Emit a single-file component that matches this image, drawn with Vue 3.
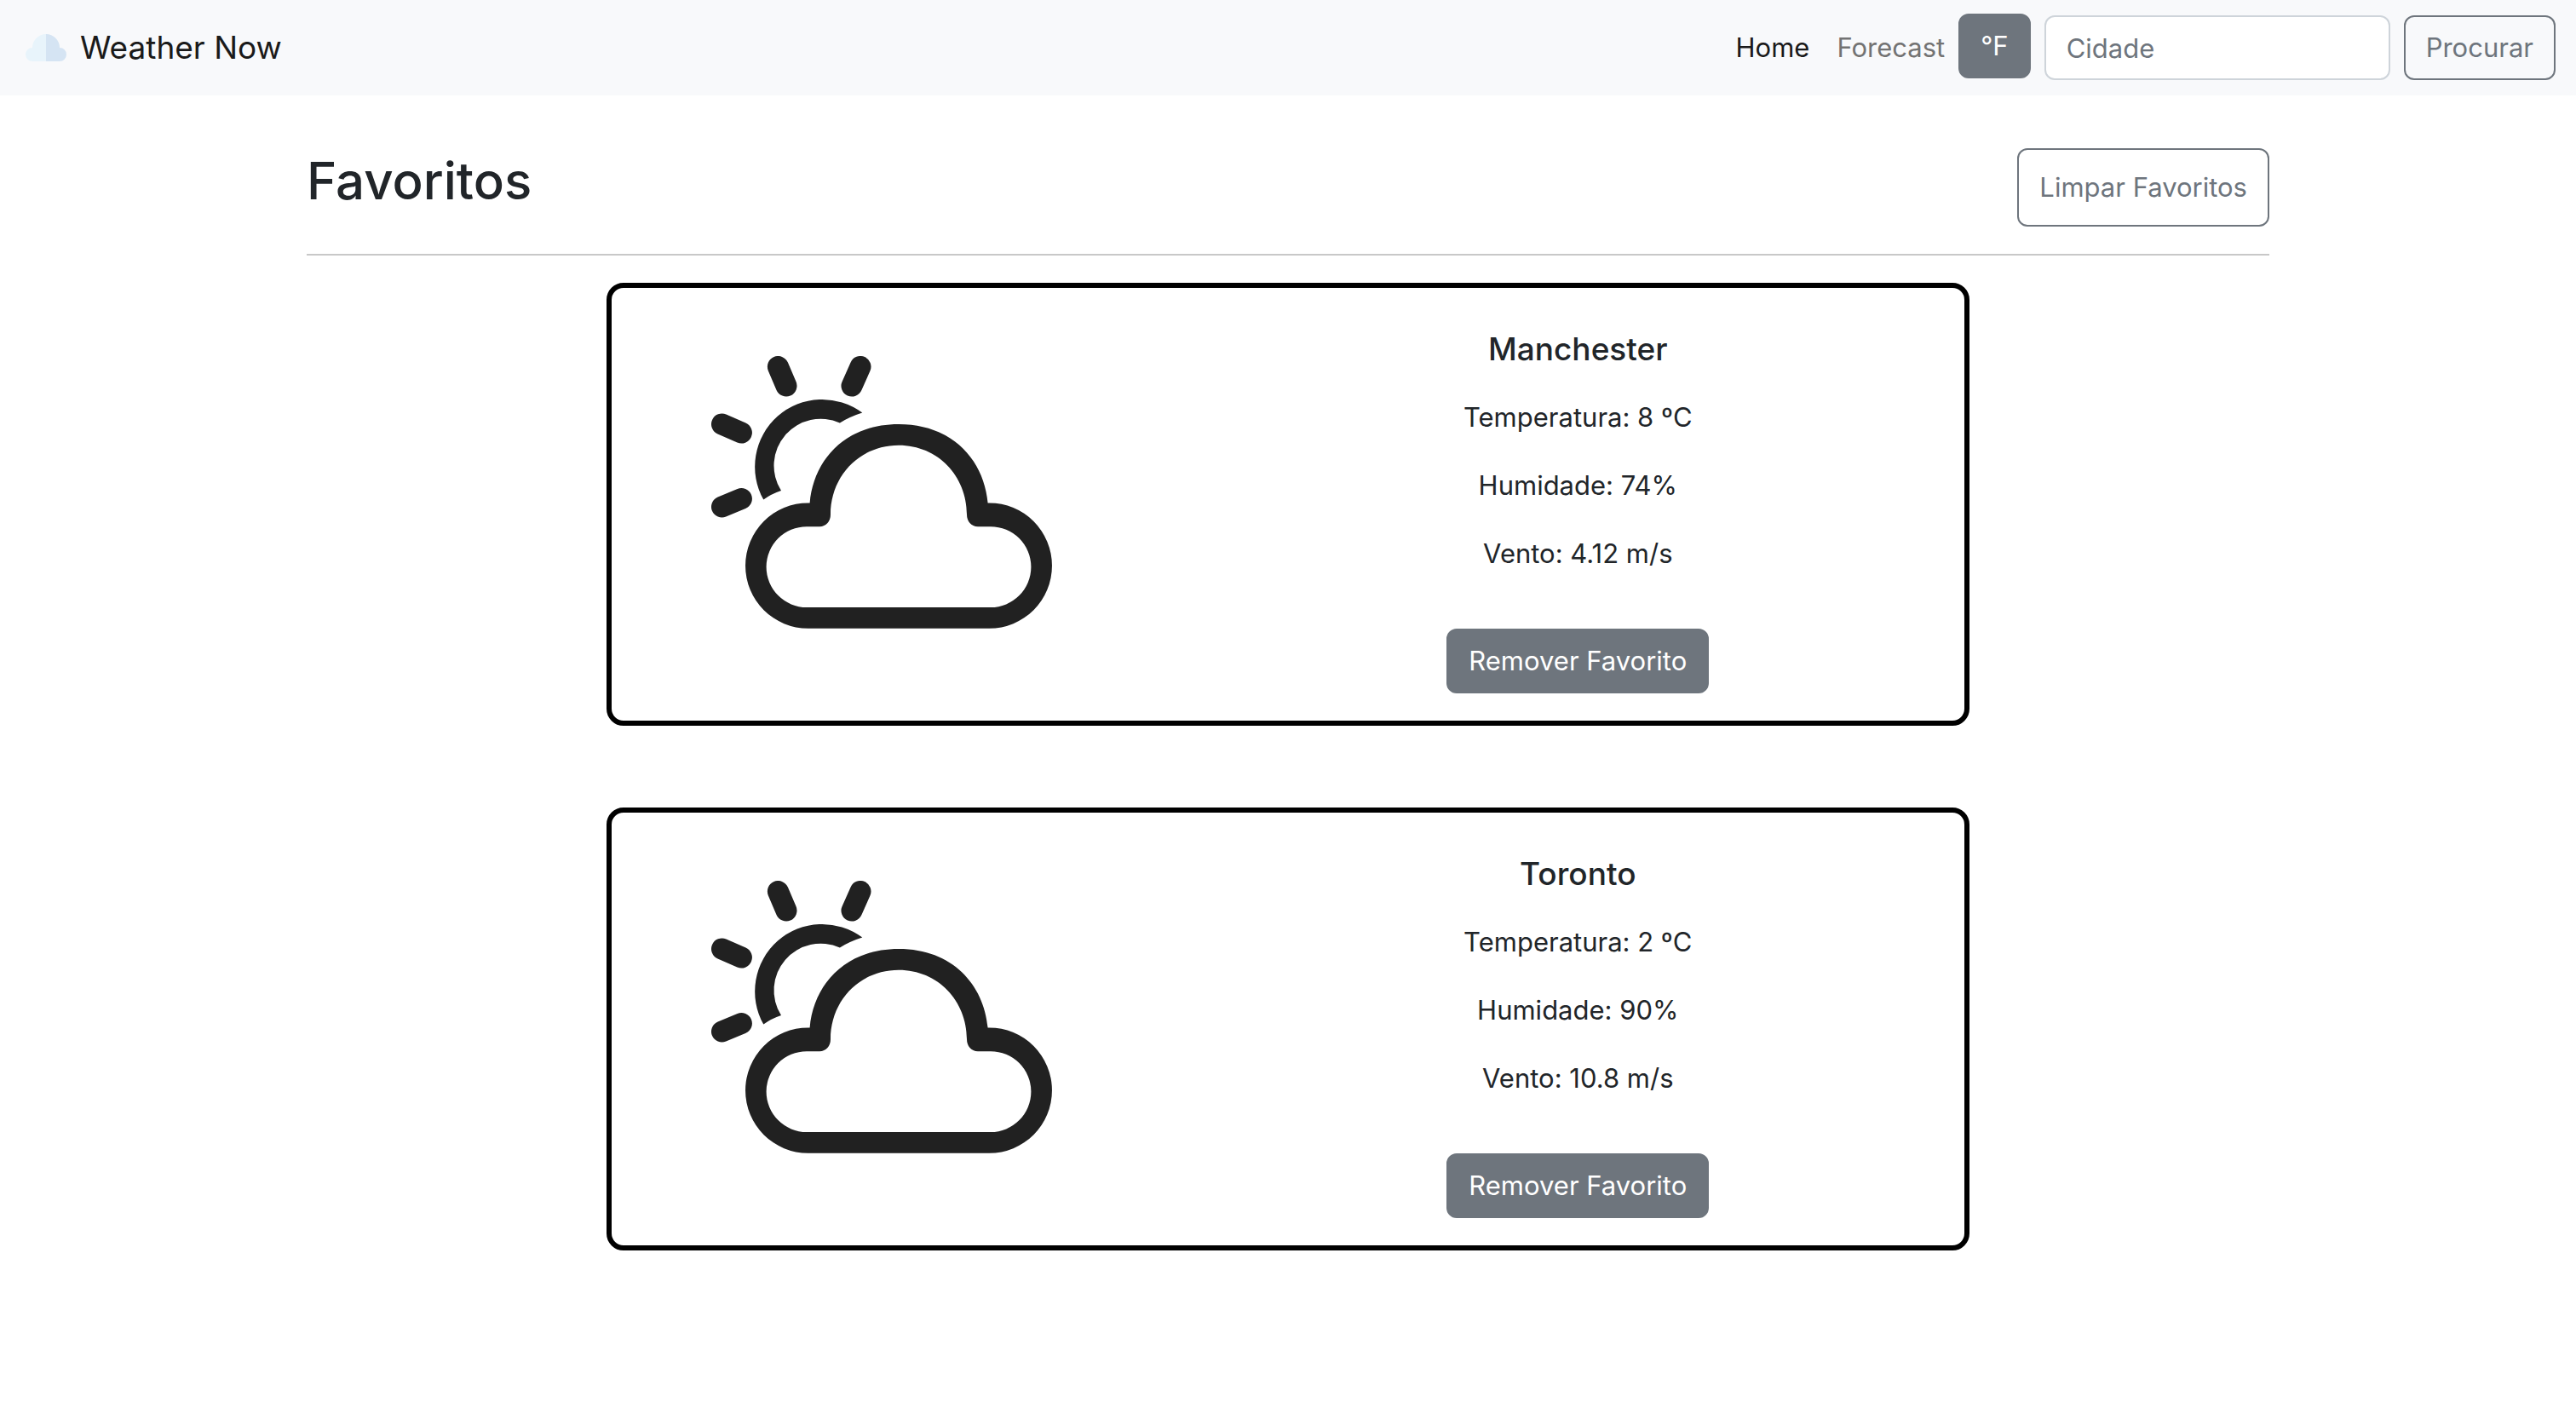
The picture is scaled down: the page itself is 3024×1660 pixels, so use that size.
<script setup>
import { ref } from 'vue'

const query = ref('')

const favorites = ref([
  { city: 'Manchester', temperature: '8 ºC', humidity: '74%', wind: '4.12 m/s' },
  { city: 'Toronto', temperature: '2 ºC', humidity: '90%', wind: '10.8 m/s' },
])

function remove(city) {
  favorites.value = favorites.value.filter((item) => item.city !== city)
}

function clearAll() {
  favorites.value = []
}
</script>

<template>
  <div class="page">
    <header class="navbar">
      <a class="brand" href="#">
        <svg class="brand-logo" viewBox="0 0 48 32" aria-hidden="true">
          <path fill="#e8f4fb" d="M24 0A16 16 0 0 0 8 16a8 8 0 0 0 0 16H24Z" />
          <path fill="#d5e4f3" d="M24 0A16 16 0 0 1 40 16a8 8 0 0 1 0 16H24Z" />
        </svg>
        <span>Weather Now</span>
      </a>
      <nav class="menu">
        <a class="link active" href="#home">Home</a>
        <a class="link" href="#forecast">Forecast</a>
        <button class="btn btn-solid unit" type="button">°F</button>
      </nav>
      <form class="search" @submit.prevent>
        <input v-model="query" class="field" type="search" placeholder="Cidade" aria-label="Cidade" />
        <button class="btn btn-outline" type="submit">Procurar</button>
      </form>
    </header>

    <main class="container">
      <div class="heading">
        <h2 class="title">Favoritos</h2>
        <button class="btn btn-outline clear" type="button" @click="clearAll">Limpar Favoritos</button>
      </div>

      <section class="cards">
        <article v-for="item in favorites" :key="item.city" class="card">
          <div class="picture">
            <svg class="weather" viewBox="0 0 400 320" aria-hidden="true">
              <g stroke="#212121" stroke-width="25" stroke-linecap="round">
                <path d="M78.4 12.5L88 35" />
                <path d="M175 12.5L165 35" />
                <path d="M12.5 80L35.4 90" />
                <path d="M12.5 177L35.4 167.5" />
              </g>
              <path
                fill="#212121"
                d="M61.3 168.6A79 79 0 0 1 177.3 66.5Q163 71 150.9 78.4A55 55 0 0 0 82 158Q70 162 61.3 168.6Z"
              />
              <path
                fill="#212121"
                fill-rule="evenodd"
                d="M220 80C283 80 320 122 324.6 172.4H326.3A73.7 73.7 0 0 1 326.3 319.8H113.7A73.7 73.7 0 0 1 113.7 172.4H115.6C120 122 157 80 220 80ZM220 104.8C174 104.8 140 141 140 186C140 194 135 200.2 127 200.2H112A47.4 47.4 0 0 0 112 295H328A47.4 47.4 0 0 0 328 200.2H313C305 200.2 300 194 300 186C300 141 266 104.8 220 104.8Z"
              />
            </svg>
          </div>
          <div class="details">
            <h5 class="city">{{ item.city }}</h5>
            <p>Temperatura: {{ item.temperature }}</p>
            <p>Humidade: {{ item.humidity }}</p>
            <p>Vento: {{ item.wind }}</p>
            <button class="btn btn-solid remove" type="button" @click="remove(item.city)">Remover Favorito</button>
          </div>
        </article>
      </section>
    </main>
  </div>
</template>

<style>
body {
  margin: 0;
  background: #fff;
}
</style>

<style scoped>
.page {
  font-family: Inter, 'Liberation Sans', sans-serif;
  font-size: 31px;
  line-height: 48px;
  color: #212529;
}

.navbar {
  display: flex;
  align-items: center;
  box-sizing: border-box;
  min-height: 112px;
  padding: 16px 24px;
  background: #f8f9fb;
}

.brand {
  display: flex;
  align-items: center;
  gap: 16px;
  margin-right: auto;
  padding-left: 6px;
  font-size: 37px;
  color: #1a1a1a;
  text-decoration: none;
}

.brand-logo {
  width: 48px;
  height: 32px;
}

.menu {
  display: flex;
  align-items: center;
  margin-right: 16px;
}

.link {
  padding: 0 16px;
  color: #737373;
  text-decoration: none;
}

.link.active {
  color: #1a1a1a;
}

.search {
  display: flex;
  gap: 16px;
}

.btn {
  box-sizing: border-box;
  height: 76px;
  padding: 0 24px;
  border: 2px solid #6e757d;
  border-radius: 12px;
  font: inherit;
  cursor: pointer;
}

.btn-solid {
  background: #6e757d;
  color: #fff;
}

.btn-outline {
  background: transparent;
  color: #6e757d;
}

.unit {
  margin-bottom: 4px;
}

.field {
  box-sizing: border-box;
  width: 406px;
  height: 76px;
  padding: 0 24px;
  border: 2px solid #ced4da;
  border-radius: 12px;
  background: #fff;
  font: inherit;
  color: #212529;
  appearance: none;
}

.field::placeholder {
  color: #6e757d;
  opacity: 1;
}

.container {
  max-width: 2304px;
  margin: 0 auto;
  padding: 62px 48px 96px;
}

.heading {
  display: flex;
  justify-content: space-between;
  align-items: flex-start;
  padding-bottom: 32px;
  border-bottom: 2px solid #c8c8c8;
}

.title {
  margin: 0;
  font-size: 60px;
  font-weight: 500;
  line-height: 76px;
}

.clear {
  height: 92px;
}

.cards {
  display: flex;
  flex-direction: column;
  align-items: center;
  gap: 96px;
  padding-top: 32px;
}

.card {
  display: grid;
  grid-template-columns: 3fr 4fr;
  box-sizing: border-box;
  width: 100%;
  max-width: 1600px;
  border: 6px solid #000;
  border-radius: 20px;
}

.picture {
  padding: 80px 0 0 117px;
}

.weather {
  display: block;
  width: 100%;
  max-width: 400px;
  fill: none;
}

.details {
  display: flex;
  flex-direction: column;
  align-items: center;
  gap: 32px;
  padding: 48px 0 32px;
}

.details p {
  margin: 0;
}

.city {
  margin: 0;
  font-size: 37px;
  font-weight: 500;
  line-height: 48px;
}

.remove {
  margin-top: 32px;
}
</style>
